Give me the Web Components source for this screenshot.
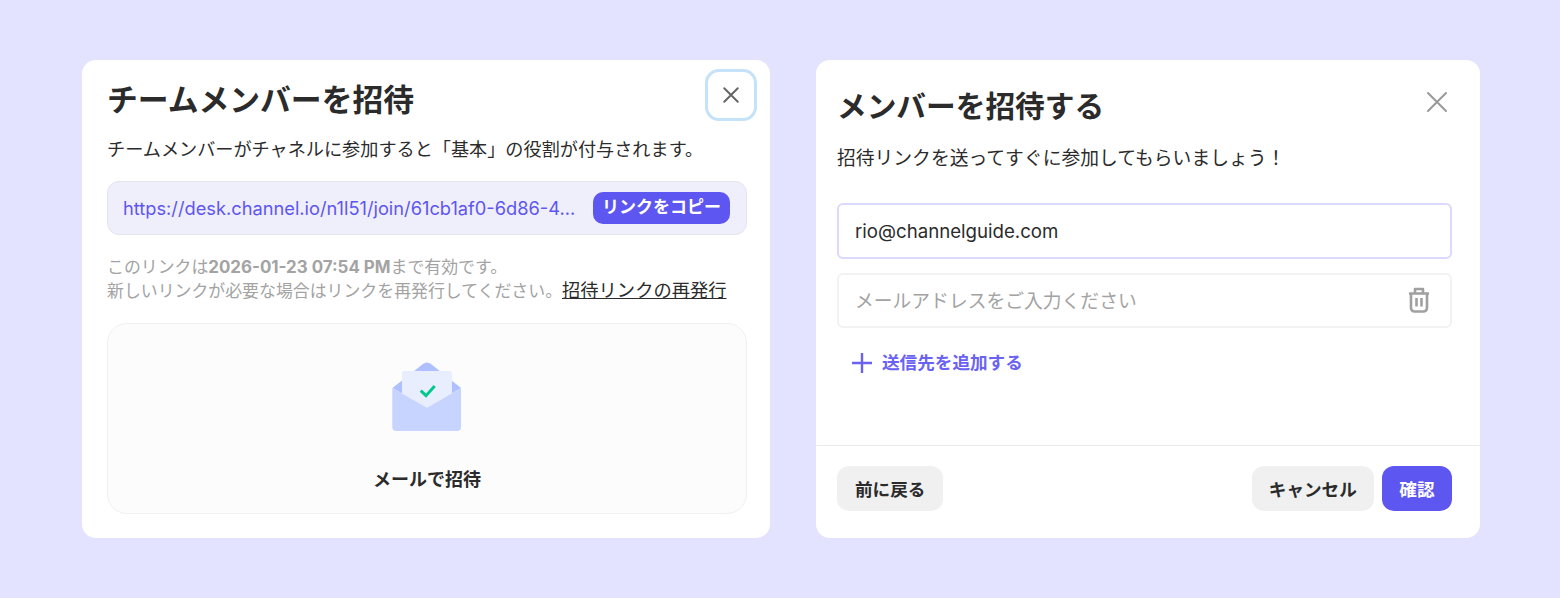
<!DOCTYPE html>
<html lang="ja">
<head>
<meta charset="utf-8">
<title>Invite</title>
<style>
    html, body { margin: 0; height: 100%; }
    body {
        background: #e3e3ff;
        font-family: Inter, "Noto Sans CJK JP", sans-serif;
        color: #2b2b2b;
    }
</style>
</head>
<body>
<invite-page>
    <team-invite-card></team-invite-card>
    <mail-invite-card></mail-invite-card>
</invite-page>

<script>
const closeIcon = (size) => `<svg width="${size}" height="${size}" viewBox="0 0 24 24" fill="none" stroke="currentColor" stroke-width="${48 / size}" stroke-linecap="round"><path d="M3 3 21 21M21 3 3 21"/></svg>`;

class InvitePage extends HTMLElement {
    connectedCallback() {
        this.attachShadow({ mode: 'open' });
        this.shadowRoot.innerHTML = `
            <style>
                :host {
                    display: flex;
                    gap: 46px;
                    padding: 60px 80px 60px 82px;
                    box-sizing: border-box;
                    height: 598px;
                }
            </style>
            <slot></slot>
        `;
    }
}

class FillButton extends HTMLElement {
    connectedCallback() {
        this.attachShadow({ mode: 'open' });
        this.shadowRoot.innerHTML = `
            <style>
                :host {
                    display: inline-flex;
                    align-items: center;
                    justify-content: center;
                    height: 45px;
                    padding: 0 var(--pad, 17.5px);
                    border-radius: 12px;
                    background: #f0f0f0;
                    color: #2b2b2b;
                    font-size: 17.6px;
                    font-weight: 700;
                    white-space: nowrap;
                }
                :host([primary]) {
                    background: #5e56f0;
                    color: #fff;
                }
            </style>
            <slot></slot>
        `;
    }
}

class TeamInviteCard extends HTMLElement {
    connectedCallback() {
        this.attachShadow({ mode: 'open' });
        this.shadowRoot.innerHTML = `
            <style>
                :host {
                    display: block;
                    position: relative;
                    width: 688px;
                    height: 478px;
                    box-sizing: border-box;
                    padding: 18px 23px 24px 25px;
                    background: #fff;
                    border-radius: 14px;
                }
                h1 {
                    margin: 0;
                    font-size: 30.8px;
                    line-height: 44px;
                    font-weight: 700;
                }
                p {
                    margin: 13px 0 0;
                    font-size: 18.15px;
                    line-height: 28px;
                    white-space: nowrap;
                }
                .close {
                    position: absolute;
                    top: 9px;
                    right: 13px;
                    width: 52px;
                    height: 52px;
                    box-sizing: border-box;
                    border: 3px solid #c4e2f8;
                    border-radius: 14px;
                    display: flex;
                    align-items: center;
                    justify-content: center;
                    color: #666;
                }
                .link {
                    display: flex;
                    align-items: center;
                    justify-content: space-between;
                    height: 54px;
                    margin-top: 18px;
                    padding: 0 16px 0 15px;
                    box-sizing: border-box;
                    border: 1px solid #e3e3ee;
                    border-radius: 12px;
                    background: #efeefb;
                }
                .url {
                    color: #5e56f0;
                    font-size: 18.25px;
                    white-space: nowrap;
                }
                .copy {
                    background: #5e56f0;
                    color: #fff;
                    font-size: 17px;
                    font-weight: 700;
                    height: 32px;
                    line-height: 30px;
                    padding: 0 9px;
                    border-radius: 10px;
                    white-space: nowrap;
                }
                .note {
                    margin-top: 21px;
                    color: #a3a3a3;
                    font-size: 16.9px;
                    line-height: 23px;
                    white-space: nowrap;
                }
                .note a {
                    color: #2b2b2b;
                    text-decoration: underline;
                    font-size: 18.3px;
                }
                .mail {
                    margin-top: 20px;
                    height: 191px;
                    box-sizing: border-box;
                    border: 1px solid #f0f0f0;
                    border-radius: 20px;
                    background: #fcfcfc;
                    display: flex;
                    flex-direction: column;
                    align-items: center;
                    padding-top: 37px;
                }
                .mail b {
                    margin-top: 36px;
                    font-size: 18px;
                    line-height: 26px;
                }
            </style>
            <h1>チームメンバーを招待</h1>
            <div class="close">${closeIcon(18)}</div>
            <p>チームメンバーがチャネルに参加すると「基本」の役割が付与されます。</p>
            <div class="link">
                <span class="url">https://desk.channel.io/n1l51/join/61cb1af0-6d86-4...</span>
                <span class="copy">リンクをコピー</span>
            </div>
            <div class="note">
                このリンクは<b>2026-01-23 07:54 PM</b>まで有効です。<br>
                新しいリンクが必要な場合はリンクを再発行してください。<a>招待リンクの再発行</a>
            </div>
            <div class="mail">
                <svg width="70" height="70" viewBox="0 0 70 70">
                    <path d="M0.5 27 31 3a6 6 0 0 1 8 0L69 27 35 47Z" fill="#aec0ff"/>
                    <path d="M10 12a2 2 0 0 1 2-2H58a2 2 0 0 1 2 2V33L35 47 10 33Z" fill="#e9eeff"/>
                    <path d="M0.3 27 35 47 69 27V66a4 4 0 0 1-4 4H4.3a4 4 0 0 1-4-4Z" fill="#c6d4ff"/>
                    <path d="M28.7 29.7 34 34.7 42.7 25" fill="none" stroke="#00c98d" stroke-width="3"/>
                </svg>
                <b>メールで招待</b>
            </div>
        `;
    }
}

class MailInviteCard extends HTMLElement {
    connectedCallback() {
        this.attachShadow({ mode: 'open' });
        this.shadowRoot.innerHTML = `
            <style>
                :host {
                    display: flex;
                    flex-direction: column;
                    position: relative;
                    width: 664px;
                    height: 478px;
                    box-sizing: border-box;
                    background: #fff;
                    border-radius: 14px;
                }
                .body {
                    flex: 1;
                    padding: 24px 28px 0 21px;
                }
                h1 {
                    margin: 0;
                    font-size: 29.7px;
                    line-height: 44px;
                    font-weight: 700;
                }
                p {
                    margin: 17px 0 0;
                    font-size: 18.8px;
                    line-height: 28px;
                }
                .close {
                    position: absolute;
                    top: 30px;
                    right: 31px;
                    color: #999;
                    display: flex;
                }
                .field {
                    display: flex;
                    align-items: center;
                    justify-content: space-between;
                    height: 55px;
                    padding: 0 20px 2px 16px;
                    box-sizing: border-box;
                    border: 2px solid #f2f2f2;
                    border-radius: 6px;
                    font-size: 18.8px;
                    color: #a3a3a3;
                }
                .field.focus {
                    height: 56px;
                    padding-bottom: 0;
                    border-color: #dbd9fd;
                    color: #2b2b2b;
                    font-size: 18.65px;
                    margin-top: 30px;
                    margin-bottom: 14px;
                }
                .add {
                    display: flex;
                    align-items: center;
                    gap: 9px;
                    margin: 22px 0 0 14px;
                    color: #6a62f2;
                    font-size: 17.6px;
                    font-weight: 700;
                    line-height: 26px;
                }
                .foot {
                    display: flex;
                    align-items: center;
                    gap: 8px;
                    height: 93px;
                    padding: 0 28px 8px 21px;
                    box-sizing: border-box;
                    border-top: 1px solid #ececec;
                }
                .spacer { flex: 1; }
                .back { --pad: 18px; }
                .cancel { --pad: 17px; }
            </style>
            <div class="body">
                <h1>メンバーを招待する</h1>
                <div class="close">${closeIcon(24)}</div>
                <p>招待リンクを送ってすぐに参加してもらいましょう！</p>
                <div class="field focus">rio@channelguide.com</div>
                <div class="field">
                    <span>メールアドレスをご入力ください</span>
                    <svg width="22" height="26" viewBox="0 0 22 26" fill="none" stroke="#a0a0a0" stroke-width="2.6" stroke-linejoin="round"><path d="M1 6.500H21M7 6.500V2H15V6.500M3 6.500V21a3.500 3.500 0 0 0 3.500 3.500H15.500a3.500 3.500 0 0 0 3.500-3.500V6.500M8.500 11V19.500M13.500 11V19.500"/></svg>
                </div>
                <div class="add">
                    <svg width="22" height="22" viewBox="0 0 22 22" fill="none" stroke="currentColor" stroke-width="2.400"><path d="M11 1V21M1 11H21"/></svg>
                    送信先を追加する
                </div>
            </div>
            <div class="foot">
                <fill-button class="back">前に戻る</fill-button>
                <span class="spacer"></span>
                <fill-button class="cancel">キャンセル</fill-button>
                <fill-button primary>確認</fill-button>
            </div>
        `;
    }
}

customElements.define('invite-page', InvitePage);
customElements.define('fill-button', FillButton);
customElements.define('team-invite-card', TeamInviteCard);
customElements.define('mail-invite-card', MailInviteCard);
</script>
</body>
</html>
